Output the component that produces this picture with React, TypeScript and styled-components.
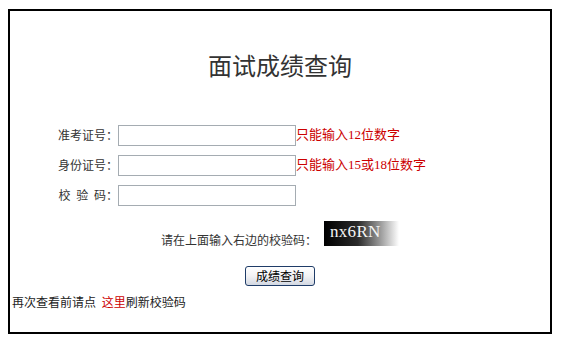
import styled, { createGlobalStyle } from 'styled-components';

const GlobalStyle = createGlobalStyle`
  body {
    margin: 0;
    background: #fff;
    font-family: 'Noto Sans CJK SC', 'Liberation Sans', sans-serif;
    font-size: 12px;
    color: #333;
  }
`;

const Box = styled.div`
  box-sizing: border-box;
  width: 544px;
  height: 325px;
  margin: 9px 0 0 8px;
  border: 2px solid #000;
  display: flex;
  flex-direction: column;
`;

const Title = styled.h1`
  margin: 39px 0 0;
  font-size: 24px;
  line-height: 30px;
  font-weight: normal;
  color: #333;
  text-align: center;
`;

const Form = styled.div`
  margin-top: 40px;
  display: grid;
  grid-template-columns: 108px 178px auto;
  grid-auto-rows: 30px;
  align-items: center;
`;

const Label = styled.span<{ $spaced?: boolean }>`
  text-align: right;
  line-height: 14px;
  color: #333;
  word-spacing: ${(p) => (p.$spaced ? '3px' : '0')};
`;

const TextInput = styled.input`
  box-sizing: border-box;
  width: 178px;
  height: 21px;
  margin: 0;
  padding: 1px 3px;
  border: 1px solid #a5acb2;
  font-size: 12px;
  outline: none;
`;

const Hint = styled.span`
  color: #cc0000;
  font-family: 'Liberation Serif', 'Noto Sans CJK SC', serif;
  font-size: 13px;
  line-height: 14px;
`;

const CodeRow = styled.div`
  margin-top: 11px;
  display: flex;
  justify-content: center;
  align-items: flex-end;
  gap: 7px;
`;

const CodeText = styled.span`
  line-height: 12px;
  color: #333;
`;

const Captcha = styled.div`
  width: 75px;
  height: 25px;
  background: linear-gradient(to right, #000 0%, #2a2a2a 45%, #9a9a9a 75%, #fff 100%);
  color: #f4f4f4;
  font-family: 'Liberation Serif', serif;
  font-size: 17px;
  line-height: 22px;
  padding-left: 6px;
  box-sizing: border-box;
  letter-spacing: 0.3px;
`;

const ButtonRow = styled.div`
  margin-top: 20px;
  display: flex;
  justify-content: center;
`;

const QueryButton = styled.button`
  width: 70px;
  height: 20px;
  padding: 0;
  border: 1px solid #1f3c68;
  border-radius: 3px;
  background: linear-gradient(to bottom, #ffffff 0%, #f2f2f4 50%, #d3d8e2 100%);
  font-family: 'Noto Sans CJK SC', sans-serif;
  font-size: 12px;
  line-height: 18px;
  color: #000;
  cursor: pointer;
`;

const Footer = styled.div`
  margin-top: 9px;
  padding-left: 2px;
  line-height: 14px;
  color: #222;
  white-space: pre;
`;

const Link = styled.a`
  margin-left: 3px;
  color: #cc0000;
  text-decoration: none;
`;

export default function App() {
  return (
    <>
      <GlobalStyle />
      <Box>
        <Title>面试成绩查询</Title>
        <Form>
          <Label>准考证号：</Label>
          <TextInput />
          <Hint>只能输入12位数字</Hint>
          <Label>身份证号：</Label>
          <TextInput />
          <Hint>只能输入15或18位数字</Hint>
          <Label $spaced>校 验 码：</Label>
          <TextInput />
          <span />
        </Form>
        <CodeRow>
          <CodeText>请在上面输入右边的校验码：</CodeText>
          <Captcha>nx6RN</Captcha>
        </CodeRow>
        <ButtonRow>
          <QueryButton>成绩查询</QueryButton>
        </ButtonRow>
        <Footer>
          再次查看前请点 <Link href="#">这里</Link>刷新校验码
        </Footer>
      </Box>
    </>
  );
}
